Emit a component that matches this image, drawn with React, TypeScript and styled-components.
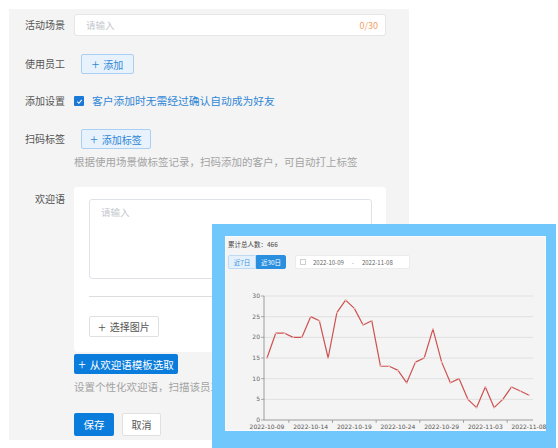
import styled, { createGlobalStyle } from "styled-components";

const GlobalStyle = createGlobalStyle`
  body {
    margin: 0;
    background: #ffffff;
    font-family: "Noto Sans CJK SC", "Liberation Sans", sans-serif;
  }
`;

const Page = styled.div`
  position: relative;
  width: 558px;
  height: 448px;
  overflow: hidden;
`;

const Panel = styled.div`
  margin: 9px 0 0 9px;
  width: 400px;
  height: 431px;
  background: #f4f4f4;
  padding-top: 5px;
  box-sizing: border-box;
`;

const Row = styled.div<{ $mt?: number; $h?: number }>`
  display: flex;
  align-items: center;
  margin-top: ${(p) => p.$mt ?? 0}px;
  height: ${(p) => p.$h ?? 22}px;
`;

const TopRow = styled.div<{ $mt?: number }>`
  display: flex;
  align-items: flex-start;
  margin-top: ${(p) => p.$mt ?? 0}px;
`;

const Label = styled.div<{ $pt?: number }>`
  width: 56px;
  margin-right: 9px;
  text-align: right;
  font-size: 10px;
  line-height: 14px;
  color: #555;
  padding-top: ${(p) => p.$pt ?? 0}px;
  flex-shrink: 0;
`;

const InputBox = styled.div`
  width: 312px;
  height: 22px;
  box-sizing: border-box;
  background: #fff;
  border: 1px solid #e6e6e6;
  border-radius: 3px;
  display: flex;
  align-items: center;
  justify-content: space-between;
  padding: 0 7px 0 11px;
  font-size: 9.5px;
`;

const Placeholder = styled.span`
  color: #c6c9cf;
`;

const Counter = styled.span`
  color: #f3a061;
  font-size: 9px;
`;

const LightButton = styled.div<{ $w: number }>`
  margin-left: 7px;
  width: ${(p) => p.$w}px;
  height: 20px;
  box-sizing: border-box;
  background: #e8f2fd;
  border: 1px solid #aacff2;
  border-radius: 2px;
  color: #2f87d6;
  font-size: 10px;
  display: flex;
  align-items: center;
  justify-content: center;
  gap: 4px;
`;

const Plus = styled.span`
  font-size: 14px;
  line-height: 12px;
  font-weight: 300;
`;

const CheckBox = styled.div`
  width: 10px;
  height: 10px;
  background: #1a78d6;
  border-radius: 1px;
  display: flex;
  align-items: center;
  justify-content: center;
  margin-right: 8px;
`;

const BlueText = styled.span`
  color: #2f87d6;
  font-size: 10.75px;
  line-height: 14px;
`;

const Hint = styled.div<{ $mt: number; $w?: number }>`
  margin: ${(p) => p.$mt}px 0 0 65px;
  width: ${(p) => (p.$w ? `${p.$w}px` : "auto")};
  overflow: hidden;
  font-size: 10.5px;
  line-height: 14px;
  color: #a3a3a3;
  white-space: nowrap;
`;

const Card = styled.div`
  width: 312px;
  height: 165px;
  box-sizing: border-box;
  background: #fff;
  border-radius: 3px;
  padding: 12px 14px 0 15px;
`;

const TextArea = styled.div`
  height: 80px;
  box-sizing: border-box;
  border: 1px solid #dfe2e8;
  border-radius: 3px;
  padding: 5px 11px;
  font-size: 9.5px;
  line-height: 14px;
`;

const Divider = styled.div`
  margin-top: 17px;
  height: 1px;
  background: #dddddd;
`;

const PlainButton = styled.div<{ $w: number; $h: number; $mt?: number }>`
  margin-top: ${(p) => p.$mt ?? 0}px;
  width: ${(p) => p.$w}px;
  height: ${(p) => p.$h}px;
  box-sizing: border-box;
  background: #fff;
  border: 1px solid #e0e0e0;
  border-radius: 2px;
  color: #555;
  font-size: 10px;
  display: flex;
  align-items: center;
  justify-content: center;
  gap: 4px;
`;

const PrimaryButton = styled.div<{ $w: number; $h: number; $mt?: number }>`
  margin-top: ${(p) => p.$mt ?? 0}px;
  width: ${(p) => p.$w}px;
  height: ${(p) => p.$h}px;
  box-sizing: border-box;
  background: #0a7cdb;
  border-radius: 2px;
  color: #fff;
  font-size: 10.5px;
  display: flex;
  align-items: center;
  justify-content: center;
  gap: 4px;
`;

const Column = styled.div`
  display: flex;
  flex-direction: column;
`;

const ButtonRow = styled.div`
  display: flex;
  gap: 8px;
  margin: 19px 0 0 65px;
`;

/* screenshot overlay lying over the form */
const Overlay = styled.div`
  position: absolute;
  left: 212px;
  top: 224px;
  width: 344px;
  height: 224px;
  box-sizing: border-box;
  background: #6fc7fc;
  padding: 12px 10px 17px 13px;
`;

const ChartPanel = styled.div`
  height: 195px;
  box-sizing: border-box;
  background: #f4f4f4;
  border: 1px solid #fafafa;
  padding: 3px 0 0 2px;
`;

const Total = styled.div`
  font-size: 6.5px;
  line-height: 9px;
  color: #444;
`;

const ToolRow = styled.div`
  display: flex;
  align-items: center;
  margin-top: 6px;
`;

const Tab = styled.div<{ $active?: boolean }>`
  height: 14px;
  width: ${(p) => (p.$active ? 30 : 28)}px;
  box-sizing: border-box;
  font-size: 6.5px;
  display: flex;
  align-items: center;
  justify-content: center;
  background: ${(p) => (p.$active ? "#2b8fe0" : "#e4f1fc")};
  color: ${(p) => (p.$active ? "#fff" : "#3f93e0")};
  border: 1px solid ${(p) => (p.$active ? "#2b8fe0" : "#bcdaf3")};
  border-radius: ${(p) => (p.$active ? "0 2px 2px 0" : "2px 0 0 2px")};
`;

const DateBox = styled.div`
  margin-left: 9px;
  width: 115px;
  height: 14px;
  box-sizing: border-box;
  background: #fff;
  border: 1px solid #ececec;
  border-radius: 2px;
  display: flex;
  align-items: center;
  padding-left: 4px;
  font-size: 6px;
  color: #666;
`;

const CalIcon = styled.span`
  width: 4px;
  height: 4px;
  border: 1px solid #cfcfcf;
  margin-right: 7px;
`;

const Dash = styled.span`
  margin: 0 8px;
  color: #999;
`;

const ChartSvg = styled.svg`
  display: block;
  margin: 8px 0 0 -2px;
`;

const data = [
  15, 21, 21, 20, 20, 25, 24, 15, 26, 29, 27, 23, 24, 13, 13, 12, 9, 14, 15, 22,
  14, 9, 10, 5, 3, 8, 3, 5, 8, 7, 6,
];
const labels = [
  "2022-10-09",
  "2022-10-14",
  "2022-10-19",
  "2022-10-24",
  "2022-10-29",
  "2022-11-03",
  "2022-11-08",
];
const xs = (i: number) => 41 + i * 8.733;
const ys = (v: number) => 143 - (v * 124) / 30;

function Chart() {
  const points = data.map((v, i) => `${xs(i)},${ys(v)}`).join(" ");
  return (
    <ChartSvg width="321" height="155" viewBox="0 0 321 155">
      {[0, 5, 10, 15, 20, 25, 30].map((v) => (
        <g key={v}>
          {v > 0 && (
            <line x1="38" x2="307" y1={ys(v)} y2={ys(v)} stroke="#e0e0e0" strokeWidth="1" />
          )}
          <line x1="35" x2="38" y1={ys(v)} y2={ys(v)} stroke="#888" strokeWidth="0.7" />
          <text x="34" y={ys(v) + 2} fontSize="6" fill="#666" textAnchor="end" fontFamily="DejaVu Sans, sans-serif">
            {v}
          </text>
        </g>
      ))}
      <line x1="38" x2="38" y1={ys(30)} y2="143" stroke="#888" strokeWidth="0.8" />
      <line x1="38" x2="307" y1="143" y2="143" stroke="#888" strokeWidth="0.8" />
      {[0, 1, 2, 3, 4, 5].map((k) => (
        <line key={k} x1={xs(2.5 + k * 5)} x2={xs(2.5 + k * 5)} y1="143" y2="146" stroke="#888" strokeWidth="0.7" />
      ))}
      {labels.map((l, k) => (
        <text key={l} x={xs(k * 5)} y="152" fontSize="6" fill="#555" textAnchor="middle" fontFamily="DejaVu Sans, sans-serif">
          {l}
        </text>
      ))}
      <polyline points={points} fill="none" stroke="#cc5250" strokeWidth="1.2" strokeLinejoin="round" />
      {data.map((v, i) => (
        <circle key={i} cx={xs(i)} cy={ys(v)} r="0.9" fill="#f2b8b7" />
      ))}
    </ChartSvg>
  );
}

export default function App() {
  return (
    <Page>
      <GlobalStyle />
      <Panel>
        <Row>
          <Label>活动场景</Label>
          <InputBox>
            <Placeholder>请输入</Placeholder>
            <Counter>0/30</Counter>
          </InputBox>
        </Row>
        <Row $mt={18} $h={20}>
          <Label>使用员工</Label>
          <LightButton $w={53}>
            <Plus>+</Plus>添加
          </LightButton>
        </Row>
        <Row $mt={17} $h={20}>
          <Label>添加设置</Label>
          <CheckBox>
            <svg width="7" height="7" viewBox="0 0 8 8">
              <path d="M1.5 4.2 L3.3 6 L6.6 2.2" stroke="#fff" strokeWidth="1.2" fill="none" />
            </svg>
          </CheckBox>
          <BlueText>客户添加时无需经过确认自动成为好友</BlueText>
        </Row>
        <Row $mt={18} $h={20}>
          <Label>扫码标签</Label>
          <LightButton $w={70}>
            <Plus>+</Plus>添加标签
          </LightButton>
        </Row>
        <Hint $mt={6}>根据使用场景做标签记录，扫码添加的客户，可自动打上标签</Hint>
        <TopRow $mt={18}>
          <Label $pt={5}>欢迎语</Label>
          <Column>
            <Card>
              <TextArea>
                <Placeholder>请输入</Placeholder>
              </TextArea>
              <Divider />
              <PlainButton $w={70} $h={21} $mt={19}>
                <Plus>+</Plus>选择图片
              </PlainButton>
            </Card>
            <PrimaryButton $w={104} $h={20} $mt={2}>
              <Plus>+</Plus>从欢迎语模板选取
            </PrimaryButton>
          </Column>
        </TopRow>
        <Hint $mt={6} $w={138}>设置个性化欢迎语，扫描该员工二维码添加的客户将收到此欢迎语</Hint>
        <ButtonRow>
          <PrimaryButton $w={40} $h={23}>保存</PrimaryButton>
          <PlainButton $w={39} $h={23}>取消</PlainButton>
        </ButtonRow>
      </Panel>
      <Overlay>
        <ChartPanel>
          <Total>累计总人数：466</Total>
          <ToolRow>
            <Tab>近7日</Tab>
            <Tab $active>近30日</Tab>
            <DateBox>
              <CalIcon />
              2022-10-09
              <Dash>-</Dash>
              2022-11-08
            </DateBox>
          </ToolRow>
          <Chart />
        </ChartPanel>
      </Overlay>
    </Page>
  );
}
